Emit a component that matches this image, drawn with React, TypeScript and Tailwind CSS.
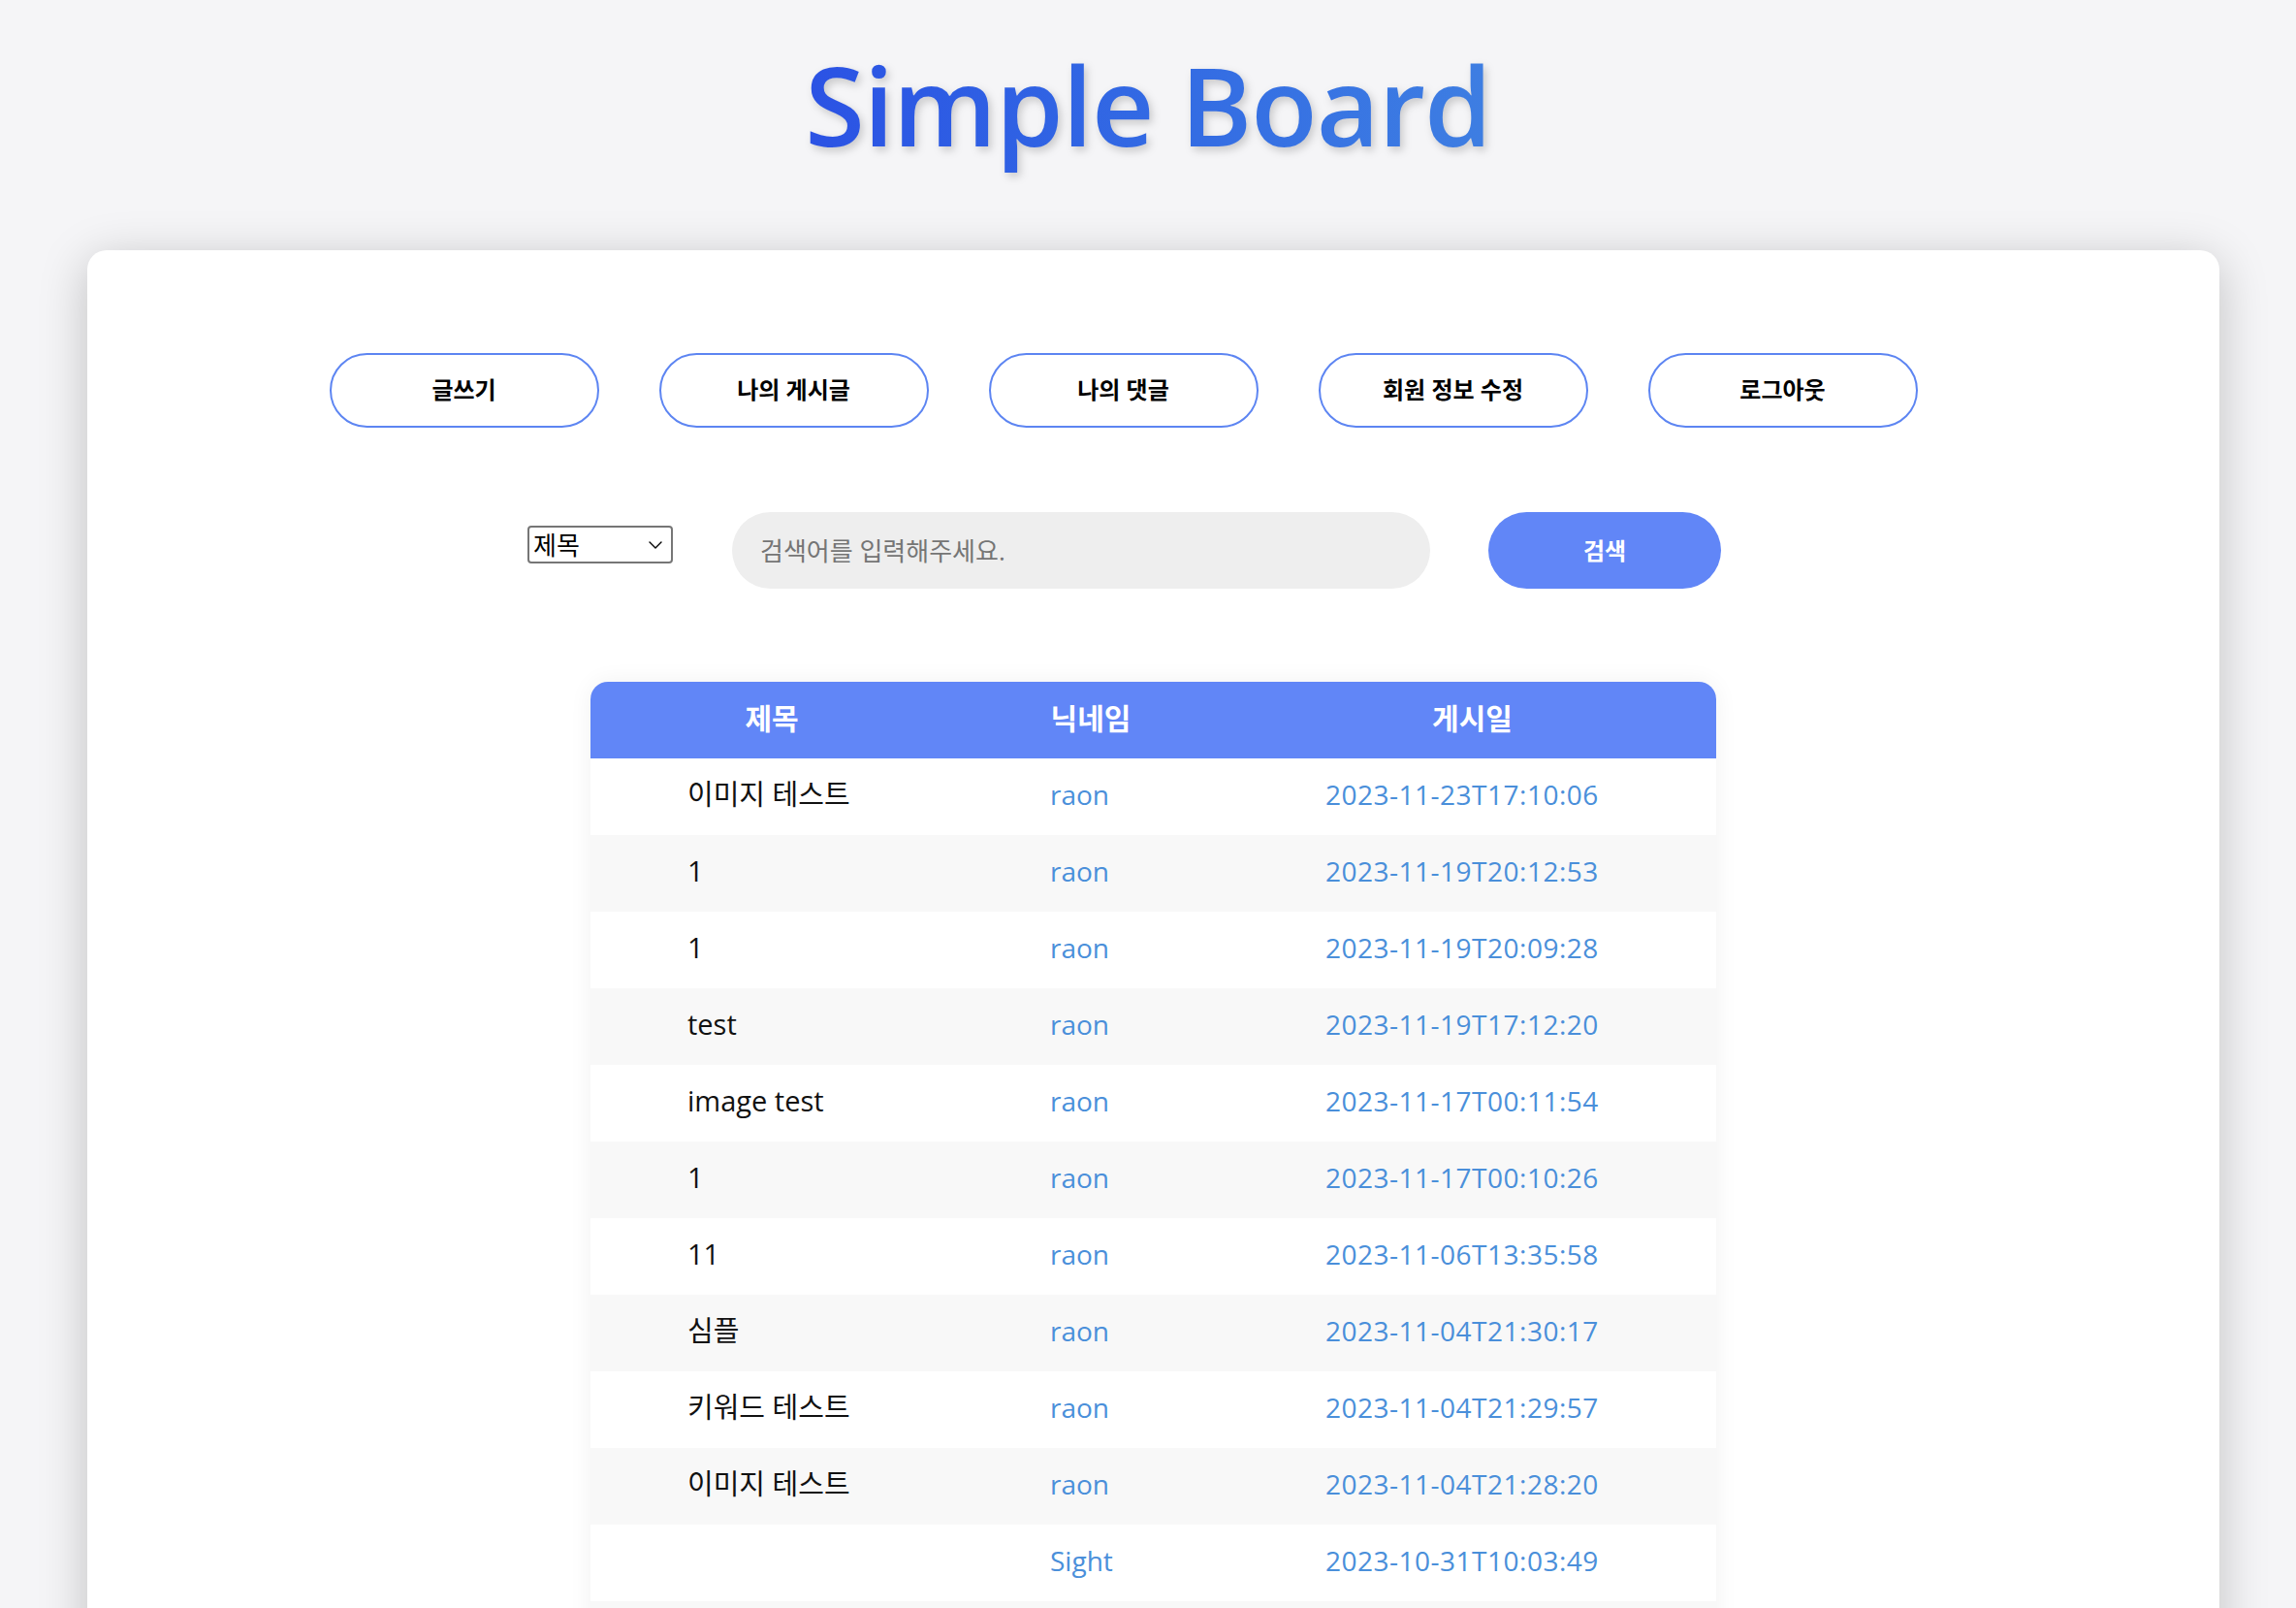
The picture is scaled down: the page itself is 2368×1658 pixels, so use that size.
import { ChevronDown } from 'lucide-react';

const posts = [
  { title: '이미지 테스트', nick: 'raon', date: '2023-11-23T17:10:06' },
  { title: '1', nick: 'raon', date: '2023-11-19T20:12:53' },
  { title: '1', nick: 'raon', date: '2023-11-19T20:09:28' },
  { title: 'test', nick: 'raon', date: '2023-11-19T17:12:20' },
  { title: 'image test', nick: 'raon', date: '2023-11-17T00:11:54' },
  { title: '1', nick: 'raon', date: '2023-11-17T00:10:26' },
  { title: '11', nick: 'raon', date: '2023-11-06T13:35:58' },
  { title: '심플', nick: 'raon', date: '2023-11-04T21:30:17' },
  { title: '키워드 테스트', nick: 'raon', date: '2023-11-04T21:29:57' },
  { title: '이미지 테스트', nick: 'raon', date: '2023-11-04T21:28:20' },
  { title: '', nick: 'Sight', date: '2023-10-31T10:03:49' },
  { title: '테스트', nick: 'Sight', date: '2023-10-30T18:22:41' },
];

const menu = ['글쓰기', '나의 게시글', '나의 댓글', '회원 정보 수정', '로그아웃'];

export default function App() {
  return (
    <div className="min-h-screen bg-[#f5f5f7] font-['Open_Sans','Noto_Sans_CJK_KR',sans-serif] pb-20">
      {/* Header */}
      <h1 className="pt-[52px] text-center text-[112px] leading-none font-semibold tracking-[-1px]">
        <span className="bg-linear-to-r from-[#2b52e4] to-[#3e7ee2] bg-clip-text text-transparent drop-shadow-[3px_4px_4px_rgba(0,0,0,0.18)]">
          Simple Board
        </span>
      </h1>

      <div className="ml-[90px] mr-[79px] mt-[94px] bg-white rounded-[20px] shadow-[0_10px_50px_rgba(0,0,0,0.22)] pt-[106px] pb-10">
        {/* Menu buttons */}
        <div className="flex justify-center">
          {menu.map(label => (
            <button
              key={label}
              className="mr-[62px] w-[278px] h-[77px] rounded-full border-2 border-[#5d85f2] bg-white text-[24px] font-bold text-black pb-[2px]"
            >
              {label}
            </button>
          ))}
        </div>

        {/* Search */}
        <div className="flex justify-center items-start mt-[87px]">
          <div className="relative mr-[61px] mt-[14px]">
            <select className="appearance-none w-[150px] h-[39px] border-2 border-[#767676] rounded-[4px] pl-[4px] text-[26px] leading-none text-black bg-white">
              <option>제목</option>
              <option>내용</option>
              <option>닉네임</option>
            </select>
            <ChevronDown className="absolute right-[6px] top-[8px] w-[24px] h-[24px] text-black pointer-events-none" strokeWidth={1.4} />
          </div>
          <input
            type="text"
            placeholder="검색어를 입력해주세요."
            className="mr-[60px] w-[720px] h-[79px] rounded-full bg-[#eeeeee] px-[29px] text-[26px] text-black placeholder:text-[#757575] outline-none"
          />
          <button className="mr-[60px] w-[240px] h-[79px] rounded-full bg-[#6186f7] text-white text-[24px] font-bold">
            검색
          </button>
        </div>

        {/* Board table */}
        <div className="mx-auto mt-[96px] w-[1161px] rounded-t-[18px] overflow-hidden shadow-[0_0_24px_rgba(0,0,0,0.06)]">
          <div className="grid grid-cols-[374px_284px_503px] h-[79px] items-center bg-[#6186f7] text-white text-[30px] font-bold pb-[5px]">
            <div className="text-center">제목</div>
            <div className="text-center">닉네임</div>
            <div className="text-center">게시일</div>
          </div>
          {posts.map((post, i) => (
            <div
              key={i}
              className={`grid grid-cols-[374px_284px_503px] h-[79px] items-center text-[28px] pb-[6px] ${i % 2 === 1 ? 'bg-[#f8f8f8]' : 'bg-white'}`}
            >
              <div className="pl-[100px] text-[29px] text-[#111111]">{post.title}</div>
              <div className="pl-[100px] text-[#4a8fda]">{post.nick}</div>
              <div className="pl-[100px] text-[#4a8fda] tracking-[0.5px]">{post.date}</div>
            </div>
          ))}
        </div>
      </div>
    </div>
  );
}
